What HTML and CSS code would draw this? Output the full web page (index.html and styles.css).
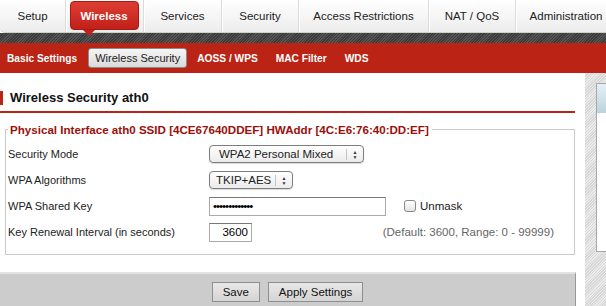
FILE: index.html
```html
<!DOCTYPE html>
<html lang="en">
<head>
  <meta charset="UTF-8">
  <title>Wireless Security</title>
  <link rel="stylesheet" href="styles.css">
</head>
<body>
  <div class="tabs">
    <a class="tab tab-setup" href="#">Setup</a>
    <a class="tab tab-wireless current" href="#"><span>Wireless</span></a>
    <a class="tab tab-services" href="#">Services</a>
    <a class="tab tab-security" href="#">Security</a>
    <a class="tab tab-access" href="#">Access Restrictions</a>
    <a class="tab tab-nat" href="#">NAT / QoS</a>
    <a class="tab tab-admin" href="#">Administration</a>
  </div>
  <div class="stripe"></div>

  <div class="subnav">
    <a href="#">Basic Settings</a>
    <a href="#" class="current">Wireless Security</a>
    <a href="#">AOSS / WPS</a>
    <a href="#">MAC Filter</a>
    <a href="#">WDS</a>
  </div>

  <div class="main">
    <div class="content">
      <h2>Wireless Security ath0</h2>

      <fieldset>
        <legend>Physical Interface ath0 SSID [4CE67640DDEF] HWAddr [4C:E6:76:40:DD:EF]</legend>

        <div class="row">
          <div class="label">Security Mode</div>
          <div class="select select-mode"><span class="value">WPA2 Personal Mixed</span><span class="arrows">&#9650;<br>&#9660;</span></div>
        </div>

        <div class="row">
          <div class="label">WPA Algorithms</div>
          <div class="select select-algo"><span class="value">TKIP+AES</span><span class="arrows">&#9650;<br>&#9660;</span></div>
        </div>

        <div class="row">
          <div class="label">WPA Shared Key</div>
          <input class="key" type="password" value="secretpassphr">
          <label class="unmask"><input type="checkbox"> Unmask</label>
        </div>

        <div class="row">
          <div class="label">Key Renewal Interval (in seconds)</div>
          <input class="num" type="text" value="3600">
          <span class="hint">(Default: 3600, Range: 0 - 99999)</span>
        </div>
      </fieldset>

      <div class="submit-footer">
        <button>Save</button>
        <button>Apply Settings</button>
      </div>
    </div>

    <div class="sidebar">
      <div class="help-box">
        <div class="help-head"></div>
      </div>
    </div>
  </div>
</body>
</html>
```

FILE: styles.css
```css
body {
  margin: 0;
  padding: 0;
  font-family: "Liberation Sans", Arial, sans-serif;
  font-size: 11px;
  color: #222;
  background: #fff;
  overflow: hidden;
}

a {
  text-decoration: none;
}

/* Main tabs */
.tabs {
  display: flex;
  height: 32px;
  background: linear-gradient(#ffffff, #ececec);
  border-bottom: 1px solid #d0d0d0;
  border-bottom-left-radius: 5px;
  box-shadow: 0 1px 0 #fff;
}

.tab {
  display: flex;
  align-items: center;
  justify-content: center;
  flex: none;
  color: #222;
  font-size: 11.5px;
  border-right: 1px solid #dcdcdc;
  box-shadow: 1px 0 0 #fff;
}

.tab-setup { width: 65px; }
.tab-wireless { width: 77px; }
.tab-services { width: 77px; }
.tab-security { width: 76px; }
.tab-access { width: 129px; }
.tab-nat { width: 86px; }
.tab-admin { width: 100px; border-right: none; box-shadow: none; }

.tab.current {
  align-items: flex-start;
}

.tab.current span {
  position: relative;
  display: block;
  width: 69px;
  height: 29px;
  margin: 1px 4px 0 3px;
  line-height: 28px;
  text-align: center;
  color: #fff;
  font-weight: bold;
  background: linear-gradient(#dd3d31, #c1211a);
  border: 1px solid #a81a12;
  border-radius: 4px;
  box-sizing: border-box;
}

.tab.current span::after {
  content: "";
  position: absolute;
  left: 12px;
  top: 28px;
  border-left: 6px solid transparent;
  border-right: 6px solid transparent;
  border-top: 6px solid #c1211a;
}

.stripe {
  height: 10px;
  background: repeating-linear-gradient(135deg, #3a3a3a 0 1px, #555 1px 2px);
}

/* Sub navigation */
.subnav {
  display: flex;
  align-items: center;
  height: 30px;
  background: #bb2314;
}

.subnav a {
  color: #fff;
  font-weight: bold;
  font-size: 10.2px;
  padding: 3px 7px;
  margin-right: 4px;
}

.subnav a.current {
  color: #222;
  font-weight: normal;
  font-size: 11px;
  background: linear-gradient(#f6f6f6, #dadada);
  border: 1px solid #8a8a8a;
  border-radius: 3px;
  padding: 3px 6px;
  margin-right: 3px;
}

/* Content */
.main {
  display: flex;
  height: 233px;
}

.content {
  width: 575px;
  padding-right: 10px;
  background: #fff;
}

h2 {
  margin: 18px 0 0;
  padding: 0 0 6px 10px;
  font-size: 13px;
  line-height: 14px;
  color: #111;
  border-bottom: 2px solid #bb2314;
  position: relative;
}

h2::before {
  content: "";
  position: absolute;
  left: 0;
  top: 0;
  width: 3px;
  height: 14px;
  background: #bb2314;
}

fieldset {
  margin: 10px 0 0 5px;
  padding: 5px 0 6px 2px;
  border: 1px solid #c8c8c8;
  height: 119px;
}

legend {
  padding: 0 3px 0 2px;
  color: #9b0f0a;
  font-weight: bold;
  font-size: 11.6px;
}

.row {
  display: flex;
  align-items: center;
  height: 26px;
}

.label {
  width: 201px;
}

.select {
  display: flex;
  align-items: center;
  height: 16px;
  border: 1px solid #7d7d7d;
  border-radius: 4px;
  background: linear-gradient(#ffffff, #ebebeb);
  box-shadow: 0 1px 1px rgba(0, 0, 0, 0.15);
  font-size: 11.5px;
}

.select .value {
  flex: 1;
  padding-left: 9px;
  white-space: nowrap;
}

.select .arrows {
  width: 16px;
  font-size: 5px;
  line-height: 5px;
  text-align: center;
  border-left: 1px solid #c4c4c4;
  color: #333;
  padding-top: 1px;
}

.select-mode { width: 153px; }
.select-algo { width: 82px; }
.select-algo .value { padding-left: 6px; }

input.key,
input.num {
  box-sizing: border-box;
  height: 19px;
  border: 1px solid #aaa;
  border-top-color: #777;
  font-family: inherit;
  font-size: 11.5px;
  padding: 0 3px;
}

input.key {
  width: 177px;
  letter-spacing: -1px;
}

input.num {
  width: 43px;
  text-align: right;
}

.unmask {
  display: flex;
  align-items: center;
  margin-left: 18px;
  gap: 4px;
  font-size: 11.5px;
}

.unmask input {
  appearance: none;
  width: 12px;
  height: 12px;
  margin: 0;
  border: 1px solid #888;
  border-radius: 3px;
  background: linear-gradient(#fff, #e4e4e4);
}

.hint {
  margin-left: auto;
  margin-right: 20px;
  color: #666;
  font-size: 11.5px;
}

.submit-footer {
  display: flex;
  justify-content: center;
  gap: 8px;
  margin-top: 17px;
  height: 36px;
  padding-top: 8px;
  box-sizing: border-box;
  background: #cccccc;
  border-top: 2px solid #e2e2e2;
  border-right: 1px solid #999;
  margin-right: -1px;
}

.submit-footer button {
  height: 20px;
  padding: 0 10px;
  font-family: inherit;
  font-size: 11.5px;
  color: #111;
  background: linear-gradient(#e8e8e8, #d4d4d4);
  border: 1px solid #8e8e8e;
}

/* Right help column */
.sidebar {
  flex: 1;
  padding: 10px 0 0 11px;
  background: repeating-linear-gradient(135deg, #d6d6d6 0 1px, #ececec 1px 2px);
}

.help-box {
  height: 167px;
  border: 1px solid #a8a8a8;
  border-right: none;
  background: #fff;
}

.help-head {
  height: 29px;
  background: linear-gradient(#e4f0f5, #bcd3dd);
}
```
